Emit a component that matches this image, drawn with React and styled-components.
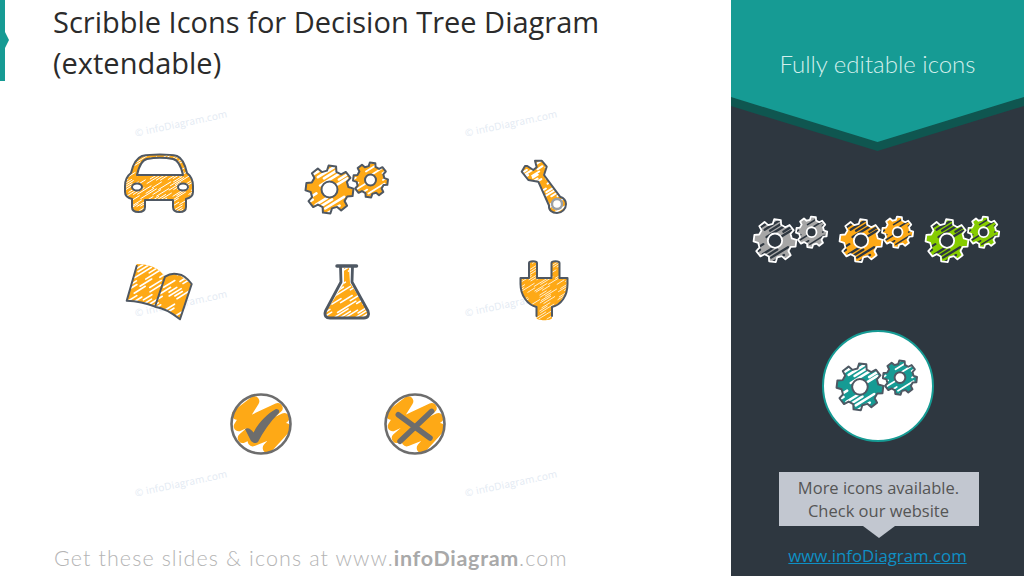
import React, { useId } from 'react';
import styled, { createGlobalStyle } from 'styled-components';

const ORANGE = '#fea916';
const SLATE = '#4f5863';
const PANEL = '#2e3740';
const TEAL = '#169b94';

const GlobalStyle = createGlobalStyle`
    html, body {
        margin: 0;
        padding: 0;
        background: #ffffff;
    }
`;

const Slide = styled.div`
    display: grid;
    grid-template-columns: 731px 293px;
    width: 1024px;
    height: 576px;
    overflow: hidden;
    font-family: "Open Sans", "Liberation Sans", sans-serif;
`;

const Main = styled.main`
    position: relative;
    display: flex;
    flex-direction: column;
    background: #ffffff;
`;

const TitleBar = styled.header`
    display: flex;
    height: 81px;
    flex: none;
`;

const Marker = styled.div`
    position: relative;
    flex: none;
    width: 5px;
    height: 81px;
    background: ${TEAL};

    &::after {
        content: '';
        position: absolute;
        left: 5px;
        top: 32px;
        border-left: 4px solid ${TEAL};
        border-top: 8px solid transparent;
        border-bottom: 8px solid transparent;
    }
`;

const Title = styled.h1`
    margin: 0 0 0 48px;
    padding-top: 1px;
    font-size: 29px;
    font-weight: 400;
    line-height: 41px;
    color: #2b2b2b;
    white-space: nowrap;
`;

const Watermark = styled.span`
    position: absolute;
    left: ${p => p.$x}px;
    top: ${p => p.$y}px;
    font-size: 10px;
    letter-spacing: 0.15px;
    line-height: 14px;
    color: #e3eaf3;
    white-space: nowrap;
    transform: rotate(-12deg);
`;

const IconGrid = styled.section`
    display: grid;
    grid-template-columns: 187px 197px 80px;
    grid-auto-rows: 70px;
    row-gap: 38px;
    padding: 67px 0 0 119px;
`;

const IconCell = styled.div`
    position: relative;
    width: 80px;
    height: 70px;
`;

const GearSlot = styled(IconCell)`
    padding-top: 15px;
    box-sizing: border-box;
`;

const VerdictRow = styled.section`
    position: relative;
    display: flex;
    gap: 84px;
    padding: 63px 0 0 226px;
`;

const Footer = styled.footer`
    margin-top: auto;
    padding: 0 0 3px 54px;
    font-family: Lato, "Liberation Sans", sans-serif;
    font-size: 21.5px;
    font-weight: 300;
    letter-spacing: 1.1px;
    line-height: 30px;
    color: #b4b4b4;
    white-space: nowrap;

    b {
        font-weight: 700;
        color: #a9a9a9;
        letter-spacing: 0.7px;
    }
`;

const Side = styled.aside`
    display: flex;
    flex-direction: column;
    align-items: center;
    background: ${PANEL};
`;

const Banner = styled.div`
    align-self: stretch;
    height: 151px;
    background: #0f5650;
    clip-path: polygon(0 0, 100% 0, 100% 106px, 50% 151px, 0 106px);
`;

const BannerFace = styled.div`
    height: 142px;
    box-sizing: border-box;
    padding-top: 48px;
    background: ${TEAL};
    clip-path: polygon(0 0, 100% 0, 100% 97px, 50% 142px, 0 97px);
    font-family: Lato, "Liberation Sans", sans-serif;
    font-size: 24px;
    font-weight: 300;
    line-height: 32px;
    text-align: center;
    color: #d3efec;
`;

const GearRow = styled.div`
    display: flex;
    gap: 11px;
    margin-top: 66px;
`;

const Badge = styled.div`
    display: flex;
    align-items: center;
    justify-content: center;
    width: 112px;
    height: 112px;
    box-sizing: border-box;
    margin-top: 67px;
    border: 2px solid ${TEAL};
    border-radius: 50%;
    background: #ffffff;
`;

const Callout = styled.div`
    position: relative;
    width: 200px;
    height: 54px;
    box-sizing: border-box;
    margin: 30px 0 0 2px;
    padding-top: 4px;
    background: #c2c7d0;
    font-size: 16.5px;
    line-height: 23px;
    text-align: center;
    color: #555555;

    &::after {
        content: '';
        position: absolute;
        left: 84px;
        top: 54px;
        border-top: 12px solid #c2c7d0;
        border-left: 16px solid transparent;
        border-right: 16px solid transparent;
    }
`;

const SiteLink = styled.a`
    margin-top: 19px;
    font-size: 16.8px;
    line-height: 22px;
    color: #0f8fc4;
    text-decoration: underline;
`;

// deterministic streaks, so the scribble looks the same on every render
function makeStreaks(w, h, step, seed, length) {
    let n = seed;
    const rnd = () => {
        n = (n * 16807) % 2147483647;
        return n / 2147483647;
    };
    const out = [];
    const slope = 0.62;
    const span = h / slope;
    for (let o = -span; o < w + 10; o += step * (0.7 + rnd() * 0.6)) {
        let t = rnd() * 0.2;
        while (t < 1) {
            const len = length * (0.6 + rnd() * 0.8);
            const x0 = o + span * t;
            const y0 = h - h * t;
            out.push(`M${x0.toFixed(1)} ${y0.toFixed(1)}L${(x0 + len).toFixed(1)} ${(y0 - len * slope).toFixed(1)}`);
            t += (len + length * (0.5 + rnd())) / span;
        }
    }
    return out.join('');
}

function Scribble({ d, line, w = 80, h = 70, fill = ORANGE, gap = '#ffffff', outline = SLATE, step = 4, streak = 0.9, stroke = 2, seed = 77, length = 14 }) {
    const id = 'c' + useId().replace(/[^a-zA-Z0-9]/g, '');
    return (
        <g>
            <clipPath id={id}>
                <path d={d} clipRule="evenodd" />
            </clipPath>
            <path d={d} fill={fill} fillRule="evenodd" />
            <path d={makeStreaks(w, h, step, seed, length)} stroke={gap} strokeWidth={streak} fill="none" strokeLinecap="round" clipPath={`url(#${id})`} />
            <path d={line || d} fill="none" stroke={outline} strokeWidth={stroke} strokeLinejoin="round" strokeLinecap="round" />
        </g>
    );
}

function gearPath(cx, cy, R, root, hole, teeth) {
    const pts = [];
    const pitch = (Math.PI * 2) / teeth;
    for (let i = 0; i < teeth; i++) {
        const t = i * pitch - Math.PI / 2 + 0.12;
        const at = (r, a) => `${(cx + r * Math.cos(a)).toFixed(2)} ${(cy + r * Math.sin(a)).toFixed(2)}`;
        pts.push(at(root, t - pitch * 0.32), at(R, t - pitch * 0.2), at(R, t + pitch * 0.2), at(root, t + pitch * 0.32));
    }
    const circle = `M${cx + hole} ${cy}A${hole} ${hole} 0 1 0 ${cx - hole} ${cy}A${hole} ${hole} 0 1 0 ${cx + hole} ${cy}Z`;
    return `M${pts.join('L')}Z${circle}`;
}

function GearPair({ width = 84, fill = ORANGE, gap = '#ffffff', outline = SLATE, stroke = 2 }) {
    return (
        <svg width={width} height={(width * 52) / 84} viewBox="0 0 84 52" style={{ display: 'block', overflow: 'visible' }}>
            <Scribble d={gearPath(23.5, 26.5, 24, 19, 8, 8)} w={84} h={52} fill={fill} gap={gap} outline={outline} step={9} streak={2.6} length={18} stroke={stroke} seed={91} />
            <Scribble d={gearPath(64.5, 17, 17.5, 14, 5.5, 8)} w={84} h={52} fill={fill} gap={gap} outline={outline} step={9} streak={1.8} length={12} stroke={stroke} seed={4242} />
        </svg>
    );
}

const IconSvg = ({ children }) => (
    <svg width="80" height="70" viewBox="0 0 80 70" style={{ display: 'block', overflow: 'visible' }}>{children}</svg>
);

const CAR = 'M23 8C32 6 50 6 58 8C63 10 66 16 68 25C72 28 74 32 74 38L74 44C74 48 71 50 67 51L67 59C67 62 65 64 60.5 64C56 64 54 62 54 59L54 52L26 52L26 59C26 62 24 64 19.5 64C15 64 13 62 13 59L13 51C9 50 6 48 6 44L6 38C6 32 8 28 12 25C14 16 18 10 23 8Z'
    + 'M18 27C20 18 23 12 28 11C36 9.5 46 9.5 54 11C59 12 62 18 64 27Z'
    + 'M13 39A5 3.5 0 1 0 23 39A5 3.5 0 1 0 13 39Z'
    + 'M59 39A5 3.5 0 1 0 69 39A5 3.5 0 1 0 59 39Z';

const WRENCH = 'M24.3 18L30.3 22L33.7 19.3L32 12.7L38.7 12.7L43.7 18.7L41 27L57 48.7C61 50 63 53 63 56C63 61 59 65 54 65C49 65 45.5 62 46 57.5L35.3 33.7L25.3 32L18.7 23.7L22 18Z';

const BOOK = 'M17.7 8C30 8 40 12 46 20.7C50 18 55 17 59.3 18.3L72.7 28L61 63.3C52 56 45 52 36 50.7C27 47 17 45 7.7 44.7Z';
const BOOK_LINE = 'M17.7 10L7.7 44.7C17 45 27 47 36 50.7C45 52 52 56 61 63.3L72.7 28C68 22 63 18.5 59.3 18.3C55 17 50 18 46 20.7L36 50.7';

const FLASK = 'M38 12L38 27L20 56C18 60 20 62 24 62L58 62C62 62 63.5 59 62 55L44 27L43 12Z';
const FLASK_LINE = 'M34.5 10.5L35 26L19.5 55C18 60 20 62 24 62L58 62C62 62 63.5 59 62 55L46 26L46.5 10.5';

const PLUG = 'M26 22L26 7C26 4.5 34 4.5 34 7L34 22L48.5 22L48.5 7C48.5 4.5 56.5 4.5 56.5 7L56.5 22L64.5 22L64.5 28C64.5 40 58 49 49 51L49 62C49 65 33.5 65 33.5 62L33.5 51C25 49 17.5 40 17.5 28L17.5 22Z';
const PLUG_LINE = 'M33.5 60L33.5 51C25 49 17.5 40 17.5 28L17.5 22L26 22L26 7C26 4.5 34 4.5 34 7L34 22L48.5 22L48.5 7C48.5 4.5 56.5 4.5 56.5 7L56.5 22L64.5 22L64.5 28C64.5 40 58 49 49 51L49 60';

const SCRUB = 'M10.7 25.7L28.3 12.3L12.7 37.3L51.7 19L16.7 49L58.3 29L26.7 52.3L60 39L41.7 59';

const Verdict = ({ children }) => (
    <svg width="70" height="70" viewBox="0 0 70 70" style={{ display: 'block' }}>
        <path d={SCRUB} fill="none" stroke={ORANGE} strokeWidth="10" strokeLinejoin="round" strokeLinecap="round" />
        <circle cx="35" cy="35" r="29.5" fill="none" stroke="#6d6d6d" strokeWidth="2.6" />
        {children}
    </svg>
);

const marks = [
    [134, 116], [464, 116],
    [134, 296], [464, 296],
    [134, 476], [464, 476],
];

export default function App() {
    return (
        <Slide>
            <GlobalStyle />
            <Main>
                <TitleBar>
                    <Marker />
                    <Title>Scribble Icons for Decision Tree Diagram<br />(extendable)</Title>
                </TitleBar>
                {marks.map(([x, y]) => (
                    <Watermark key={`${x}-${y}`} $x={x} $y={y}>© infoDiagram.com</Watermark>
                ))}
                <IconGrid>
                    <IconCell>
                        <IconSvg>
                            <Scribble d={CAR} step={3.5} streak={1} length={12} />
                        </IconSvg>
                    </IconCell>
                    <GearSlot>
                        <GearPair />
                    </GearSlot>
                    <IconCell>
                        <IconSvg>
                            <Scribble d={WRENCH} step={5} streak={2} length={8} />
                            <circle cx="54" cy="56" r="5" fill="#ffffff" stroke="#9a9fa5" strokeWidth="2.4" />
                        </IconSvg>
                    </IconCell>
                    <IconCell>
                        <IconSvg>
                            <Scribble d={BOOK} line={BOOK_LINE} step={6} streak={1.6} length={12} />
                        </IconSvg>
                    </IconCell>
                    <IconCell>
                        <IconSvg>
                            <Scribble d={FLASK} line={FLASK_LINE} step={6} streak={1.5} length={14} stroke={2.8} />
                            <path d="M31 10L50.5 10" stroke={SLATE} strokeWidth="3.5" strokeLinecap="round" />
                        </IconSvg>
                    </IconCell>
                    <IconCell>
                        <IconSvg>
                            <Scribble d={PLUG} line={PLUG_LINE} step={4} streak={0.8} length={10} />
                        </IconSvg>
                    </IconCell>
                </IconGrid>
                <VerdictRow>
                    <Verdict>
                        <path d="M19 40C22 38 25 40 27.5 43.5C33 33 42 24 50 20C54 20 54 23 52 25C44 33 37 43 32 53C30 55 27 54 25 52Z" fill="#6d6d6d" />
                    </Verdict>
                    <Verdict>
                        <path d="M18.3 25.7L50 49M51.7 22.3L20 52.3" fill="none" stroke="#6d6d6d" strokeWidth="5.5" strokeLinecap="round" />
                    </Verdict>
                </VerdictRow>
                <Footer>Get these slides &amp; icons at www.<b>infoDiagram</b>.com</Footer>
            </Main>
            <Side>
                <Banner>
                    <BannerFace>Fully editable icons</BannerFace>
                </Banner>
                <GearRow>
                    <GearPair width={75} fill="#a6a6a6" gap={PANEL} outline="#ffffff" />
                    <GearPair width={75} fill={ORANGE} gap={PANEL} outline="#ffffff" />
                    <GearPair width={75} fill="#86cc00" gap={PANEL} outline="#ffffff" />
                </GearRow>
                <Badge>
                    <GearPair width={82} fill={TEAL} gap="#ffffff" outline={SLATE} />
                </Badge>
                <Callout>More icons available.<br />Check our website</Callout>
                <SiteLink href="#">www.infoDiagram.com</SiteLink>
            </Side>
        </Slide>
    );
}
